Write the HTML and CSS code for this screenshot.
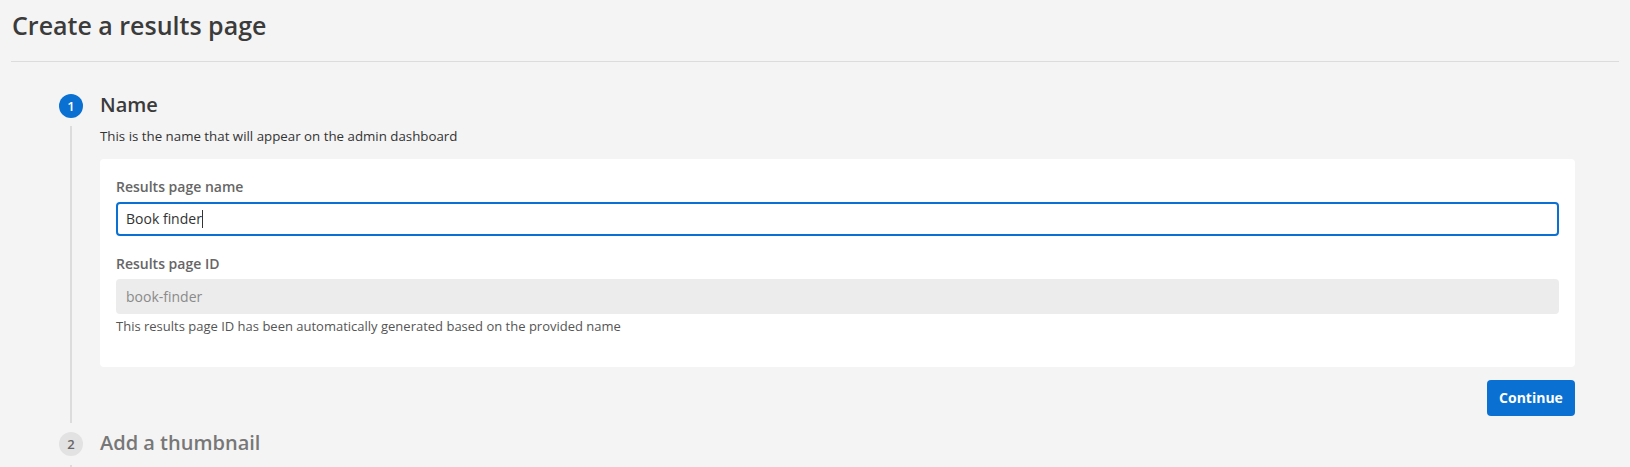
FILE: index.html
```html
<!DOCTYPE html>
<html lang="en">
<head>
    <meta charset="UTF-8">
    <title>Create a results page</title>
    <link rel="stylesheet" href="styles.css">
</head>
<body>
    <div class="page">
        <div class="header">
            <h1>Create a results page</h1>
        </div>
        <div class="steps">
            <!-- step 1: active -->
            <div class="step active">
                <div class="rail">
                    <span class="num">1</span>
                    <span class="track"></span>
                </div>
                <div class="body">
                    <h2>Name</h2>
                    <p class="desc">This is the name that will appear on the admin dashboard</p>
                    <div class="card">
                        <label class="label" for="pageName">Results page name</label>
                        <div class="input focus" id="pageName">Book finder<span class="caret"></span></div>
                        <label class="label second">Results page ID</label>
                        <div class="input readonly">book-finder</div>
                        <p class="help">This results page ID has been automatically generated based on the provided name</p>
                    </div>
                    <div class="actions">
                        <a href="javascript:;" class="btn">Continue</a>
                    </div>
                </div>
            </div>
            <!-- step 2 -->
            <div class="step">
                <div class="rail">
                    <span class="num">2</span>
                    <span class="track"></span>
                </div>
                <div class="body">
                    <h2>Add a thumbnail</h2>
                </div>
            </div>
        </div>
    </div>
</body>
</html>
```
FILE: styles.css
```css
*{
    margin: 0;
    padding: 0;
    box-sizing: border-box;
}
html, body{
    height: 100%;
    overflow: hidden;
}
body{
    background: #f4f4f4;
    font-family: "Open Sans", "Noto Sans", sans-serif;
    color: #333;
}
.page{
    padding: 0 11px;
}
.header{
    padding: 7px 0 18px 1px;
    border-bottom: 1px solid #dcdcdc;
}
.header h1{
    font-size: 25px;
    line-height: 36px;
    font-weight: 600;
    color: #3b3b3b;
}
.steps{
    padding: 29px 44px 0 48px;
}
.step{
    display: flex;
}
.rail{
    width: 24px;
    display: flex;
    flex-direction: column;
    align-items: center;
    margin-right: 17px;
}
.num{
    width: 24px;
    height: 24px;
    border-radius: 50%;
    margin-top: 3px;
    background: #e2e2e2;
    color: #666;
    font-size: 13px;
    font-weight: 600;
    line-height: 24px;
    text-align: center;
}
.active .num{
    background: #0a70d2;
    color: #fff;
}
.track{
    flex: 1;
    width: 2px;
    background: #dcdcdc;
    margin: 8px 0 6px;
}
.step + .step .track{
    margin-top: 9px;
    min-height: 40px;
}
.body{
    flex: 1;
    padding-bottom: 13px;
}
.body h2{
    font-size: 20px;
    line-height: 28px;
    font-weight: 600;
    color: #777;
}
.active .body h2{
    color: #3b3b3b;
}
.desc{
    margin-top: 7px;
    font-size: 13.3px;
    line-height: 20px;
    color: #333;
}
.card{
    margin-top: 13px;
    background: #fff;
    border-radius: 4px;
    padding: 18px 16px 32px;
}
.label{
    display: block;
    font-size: 14px;
    line-height: 20px;
    font-weight: 600;
    color: #666;
}
.label.second{
    margin-top: 18px;
}
.input{
    margin-top: 5px;
    height: 34px;
    border-radius: 4px;
    padding: 0 8px;
    font-size: 14px;
    line-height: 30px;
    color: #333;
}
.input.focus{
    border: 2px solid #0a70d2;
}
.caret{
    display: inline-block;
    width: 1px;
    height: 18px;
    background: #333;
    vertical-align: -4px;
}
.input.readonly{
    height: 35px;
    line-height: 35px;
    padding: 0 10px;
    background: #ececec;
    color: #8a8a8a;
}
.help{
    margin-top: 4px;
    font-size: 13px;
    line-height: 17px;
    color: #555;
}
.actions{
    display: flex;
    justify-content: flex-end;
    margin-top: 13px;
}
.btn{
    display: inline-block;
    height: 36px;
    width: 88px;
    border-radius: 4px;
    background: #0a70d2;
    color: #fff;
    font-size: 14px;
    font-weight: 700;
    line-height: 36px;
    text-align: center;
    text-decoration: none;
}
```
